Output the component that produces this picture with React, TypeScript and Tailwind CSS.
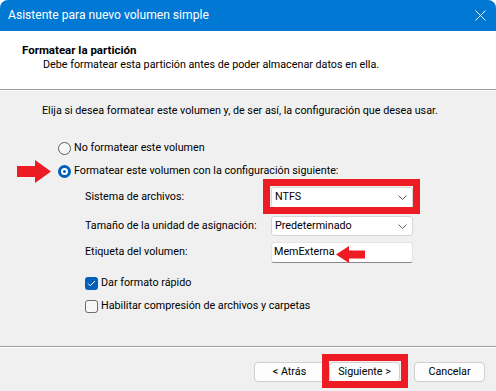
import React from "react";

const FONT = { fontFamily: "Roboto, 'Liberation Sans', sans-serif" };

function Chevron() {
  return (
    <svg width="9" height="5" viewBox="0 0 9 5" className="shrink-0">
      <path d="M0.5 0.5 L4.5 4.5 L8.5 0.5" fill="none" stroke="#5f5f5f" strokeWidth="1" />
    </svg>
  );
}

function Radio({ checked, label }: { checked?: boolean; label: string }) {
  return (
    <div className="flex items-center h-4 gap-[3px]">
      {checked ? (
        <span className="w-[13px] h-[13px] rounded-full bg-[#005fb8] flex items-center justify-center">
          <span className="w-[7px] h-[7px] rounded-full bg-white flex items-center justify-center">
            <span className="w-[3px] h-[3px] rounded-full bg-[#005fb8]" />
          </span>
        </span>
      ) : (
        <span className="w-[13px] h-[13px] rounded-full border border-[#5d5d5d] bg-[#f7f7f7]" />
      )}
      <span>{label}</span>
    </div>
  );
}

function Check({ checked, label }: { checked?: boolean; label: string }) {
  return (
    <div className="flex items-center h-4 gap-[3px]">
      {checked ? (
        <span className="w-[13px] h-[13px] rounded-[3px] bg-[#005fb8] flex items-center justify-center">
          <svg width="9" height="7" viewBox="0 0 9 7">
            <path d="M1 3.5 L3.3 5.8 L8 1" fill="none" stroke="white" strokeWidth="1" />
          </svg>
        </span>
      ) : (
        <span className="w-[13px] h-[13px] rounded-[3px] border border-[#6b6b6b] bg-[#f7f7f7]" />
      )}
      <span>{label}</span>
    </div>
  );
}

function Combo({ value }: { value: string }) {
  return (
    <div className="w-[142px] h-full bg-white border border-[#d6d6d6] rounded-[3px] flex items-center justify-between pl-[3px] pr-[5px]">
      <span>{value}</span>
      <Chevron />
    </div>
  );
}

function Button({ label }: { label: string }) {
  return (
    <div className="w-[71px] h-[20px] bg-[#fdfdfd] border border-[#d0d0d0] rounded-[4px] flex items-center justify-center">
      {label}
    </div>
  );
}

export default function App() {
  return (
    <div className="w-[496px] h-[391px] bg-white text-[10.75px] text-black" style={FONT}>
      <div className="w-full h-full rounded-t-lg overflow-hidden flex flex-col bg-[#f0f0f0]">
        {/* title bar */}
        <div className="h-[31px] bg-[#0078d4] flex items-center justify-between pl-2 pr-[10px] text-white text-[12.1px]">
          <span>Asistente para nuevo volumen simple</span>
          <svg width="11" height="11" viewBox="0 0 11 11">
            <path d="M0.5 0.5 L10.5 10.5 M10.5 0.5 L0.5 10.5" stroke="white" strokeWidth="1" />
          </svg>
        </div>

        {/* header */}
        <div className="h-[59px] bg-white border-b border-[#a0a0a0] pt-[11px]">
          <div className="pl-[22px] font-bold text-[11.5px] leading-4">Formatear la partición</div>
          <div className="pl-[43px] leading-4 mt-[-1px]">
            Debe formatear esta partición antes de poder almacenar datos en ella.
          </div>
        </div>

        {/* body */}
        <div className="flex-1 border-t border-white flex flex-col">
          <div className="pl-[42px] mt-[12px] leading-4">
            Elija si desea formatear este volumen y, de ser así, la configuración que desea usar.
          </div>

          <div className="relative pl-[58px] mt-[21px] flex flex-col gap-[7px]">
            <Radio label="No formatear este volumen" />
            <Radio checked label="Formatear este volumen con la configuración siguiente:" />
            <svg className="absolute left-[17px] top-[20px]" width="34" height="23" viewBox="0 0 34 23">
              <path d="M0 6 H18 V0 L34 11.5 L18 23 V17 H0 Z" fill="#ed1c24" />
            </svg>
          </div>

          <div className="pl-[85px] mt-[8px] flex flex-col">
            <div className="flex items-center h-[21px]">
              <span className="w-[186px]">Sistema de archivos:</span>
              <div className="relative h-full">
                <Combo value="NTFS" />
                <div className="absolute -left-[8px] -right-[7px] -top-[8px] -bottom-[6px] border-[7px] border-[#ed1c24]" />
              </div>
            </div>
            <div className="flex items-center h-[20px] mt-[8px]">
              <span className="w-[186px]">Tamaño de la unidad de asignación:</span>
              <Combo value="Predeterminado" />
            </div>
            <div className="flex items-center h-[21px] mt-[6px]">
              <span className="w-[186px]">Etiqueta del volumen:</span>
              <div className="relative w-[142px] h-full bg-white border border-[#e3e3e3] border-b-[#8a8a8a] rounded-[3px] flex items-center pl-[2px]">
                <span>MemExterna</span>
                <svg className="absolute left-[64px] top-[3px]" width="29" height="17" viewBox="0 0 29 17">
                  <path d="M0 8.5 L13 0 V4.5 H29 V12.5 H13 V17 Z" fill="#ed1c24" />
                </svg>
              </div>
            </div>
            <div className="mt-[12px] flex flex-col gap-[7px]">
              <Check checked label="Dar formato rápido" />
              <Check label="Habilitar compresión de archivos y carpetas" />
            </div>
          </div>
        </div>

        {/* footer */}
        <div className="h-[45px] border-t border-[#a0a0a0] flex flex-col">
          <div className="h-px bg-white" />
          <div className="flex justify-end pr-[11px] pt-[14px]">
            <Button label="< Atrás" />
            <div className="relative ml-[4px]">
              <Button label="Siguiente >" />
              <div className="absolute -left-[7px] -right-[8px] -top-[8px] -bottom-[6px] border-[7px] border-[#ed1c24]" />
            </div>
            <div className="ml-[14px]">
              <Button label="Cancelar" />
            </div>
          </div>
        </div>
      </div>
    </div>
  );
}
